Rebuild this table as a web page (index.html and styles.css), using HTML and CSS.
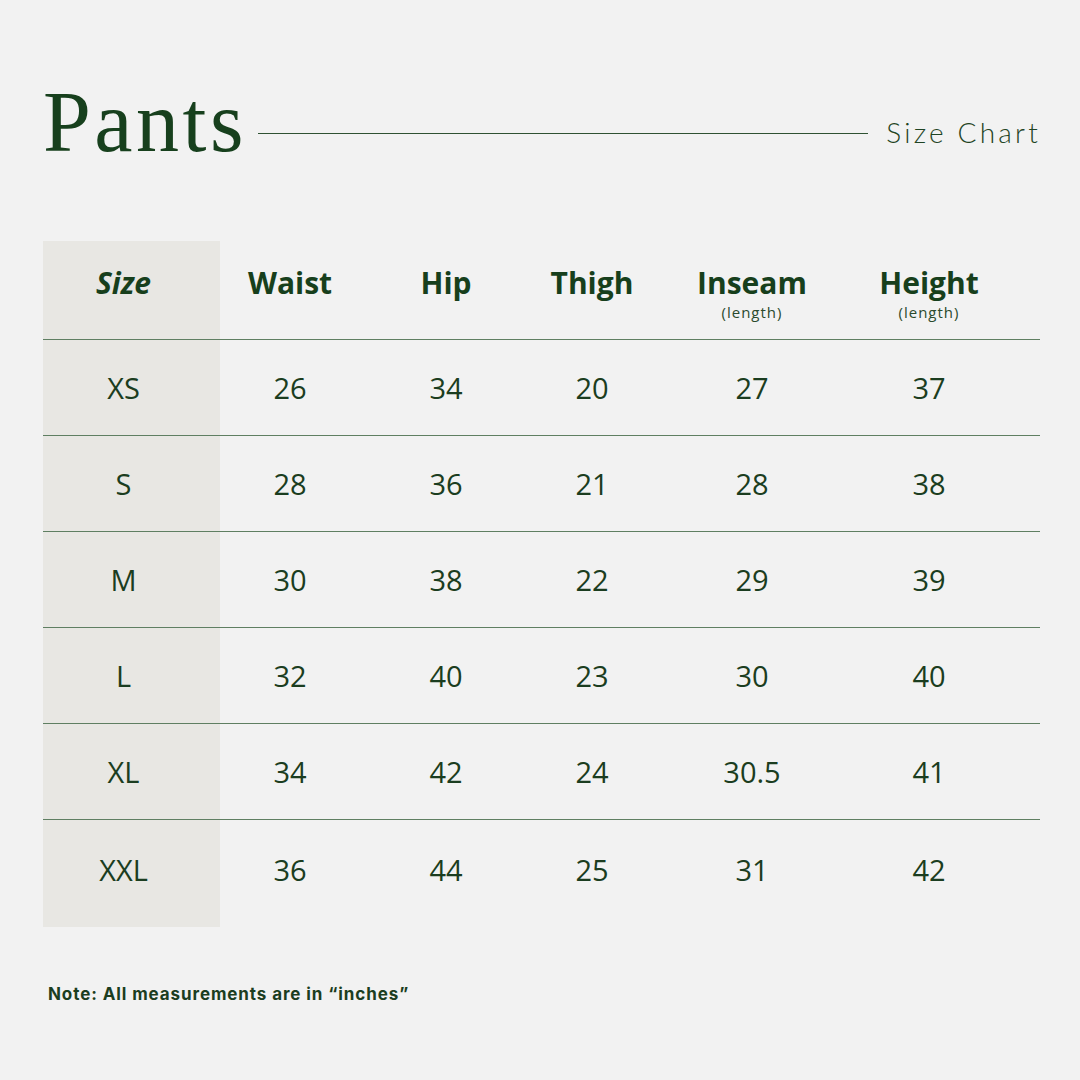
FILE: index.html
```html
<!DOCTYPE html>
<html>
<head>
<meta charset="utf-8">
<link rel="stylesheet" href="styles.css">
</head>
<body>
<div class="page">
  <header class="head">
    <h1 class="title">Pants</h1>
    <div class="rule"></div>
    <div class="sub">Size Chart</div>
  </header>
  <div class="table">
    <div class="row hdr">
      <div class="c size"><span class="hsize">Size</span></div>
      <div class="c"><span class="h">Waist</span></div>
      <div class="c"><span class="h">Hip</span></div>
      <div class="c"><span class="h">Thigh</span></div>
      <div class="c"><span class="h">Inseam</span><span class="len">(length)</span></div>
      <div class="c"><span class="h">Height</span><span class="len">(length)</span></div>
      <div class="c"></div>
    </div>
    <div class="row">
      <div class="c size">XS</div><div class="c">26</div><div class="c">34</div><div class="c">20</div><div class="c">27</div><div class="c">37</div><div class="c"></div>
    </div>
    <div class="row">
      <div class="c size">S</div><div class="c">28</div><div class="c">36</div><div class="c">21</div><div class="c">28</div><div class="c">38</div><div class="c"></div>
    </div>
    <div class="row">
      <div class="c size">M</div><div class="c">30</div><div class="c">38</div><div class="c">22</div><div class="c">29</div><div class="c">39</div><div class="c"></div>
    </div>
    <div class="row">
      <div class="c size">L</div><div class="c">32</div><div class="c">40</div><div class="c">23</div><div class="c">30</div><div class="c">40</div><div class="c"></div>
    </div>
    <div class="row">
      <div class="c size">XL</div><div class="c">34</div><div class="c">42</div><div class="c">24</div><div class="c">30.5</div><div class="c">41</div><div class="c"></div>
    </div>
    <div class="row last">
      <div class="c size">XXL</div><div class="c">36</div><div class="c">44</div><div class="c">25</div><div class="c">31</div><div class="c">42</div><div class="c"></div>
    </div>
  </div>
  <p class="note">Note: All measurements are in “inches”</p>
</div>
</body>
</html>
```
FILE: styles.css
```css
html, body {
  margin: 0;
  padding: 0;
  background: #f2f2f2;
}
.page {
  width: 1080px;
  height: 1080px;
  box-sizing: border-box;
  padding: 72px 40px 0 43px;
  color: #1b3d20;
  font-family: "Open Sans", sans-serif;
}
.head {
  display: flex;
  align-items: center;
  height: 100px;
}
.title {
  margin: 0;
  font-family: "Liberation Serif", serif;
  font-weight: normal;
  font-size: 86px;
  line-height: 100px;
  letter-spacing: 3.5px;
  color: #17401d;
}
.rule {
  flex: 1;
  height: 1px;
  background: #2f5233;
  margin: 22px 18px 0 11px;
}
.sub {
  font-family: "Lato", sans-serif;
  font-weight: 300;
  font-size: 28px;
  letter-spacing: 3.2px;
  margin-top: 20px;
  margin-right: -1px;
  color: #1f4424;
}
.table {
  margin-top: 69px;
}
.row {
  display: grid;
  grid-template-columns: 177px 140px 172px 120px 200px 154px 1fr;
  height: 96px;
  border-bottom: 1.5px solid #5f7f62;
  box-sizing: border-box;
}
.row.hdr {
  height: 99px;
}
.row.last {
  border-bottom: none;
  height: 107px;
}
.c {
  display: flex;
  flex-direction: column;
  align-items: center;
  justify-content: center;
  font-size: 29px;
  color: #1b3d20;
}
.row.last .c {
  padding-bottom: 8px;
}
.c.size {
  background: #e8e7e3;
  padding-right: 16px;
}
.h, .hsize {
  font-weight: 700;
  font-size: 30px;
  line-height: 34px;
  color: #173f1c;
}
.hdr .c {
  box-sizing: border-box;
  justify-content: flex-start;
  padding-top: 25px;
}
.hsize {
  font-style: italic;
}
.len {
  margin-top: 3px;
  font-size: 15px;
  line-height: 18px;
  letter-spacing: 1px;
  font-weight: 400;
  color: #2a4a2d;
}
.note {
  margin: 57px 0 0 5px;
  font-family: "Inter", sans-serif;
  font-weight: 700;
  font-size: 17px;
  letter-spacing: 0.9px;
  color: #1b3d20;
}
```
